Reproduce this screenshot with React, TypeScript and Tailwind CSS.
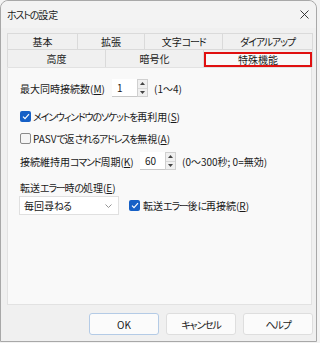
import React from "react";

function jp(text: string): React.ReactNode[] {
  const parts = text.split(/([\u3040-\u30ff]+)/);
  return parts.map((p, i) =>
    /^[\u3040-\u30ff]+$/.test(p) ? (
      <span key={i} className="tracking-[-1.2px]">
        {p}
      </span>
    ) : (
      <React.Fragment key={i}>{p}</React.Fragment>
    )
  );
}

function Label({ text, acc }: { text: string; acc: string }) {
  return (
    <span>
      {jp(text)}(<span className="underline">{acc}</span>)
    </span>
  );
}

function Spinner() {
  return (
    <div className="flex h-[18px] w-[11px] flex-col border border-[#d0d0d0] bg-[#f0f0f0]">
      <div className="flex flex-1 items-center justify-center border-b border-[#d8d8d8]">
        <svg width="5" height="3" viewBox="0 0 5 3"><path d="M0 3 L2.5 0 L5 3 Z" fill="#444" /></svg>
      </div>
      <div className="flex flex-1 items-center justify-center">
        <svg width="5" height="3" viewBox="0 0 5 3"><path d="M0 0 L2.5 3 L5 0 Z" fill="#444" /></svg>
      </div>
    </div>
  );
}

function NumInput({ value }: { value: string }) {
  return (
    <div className="flex items-center">
      <div className="flex h-[18px] w-[25px] items-center border-b border-[#c8c8c8] bg-white pl-[5px] text-[10px] text-[#1a1a1a]">
        {value}
      </div>
      <Spinner />
    </div>
  );
}

function Check({ checked }: { checked: boolean }) {
  return checked ? (
    <div className="flex h-[11px] w-[11px] items-center justify-center rounded-[2px] bg-[#1660c6]">
      <svg width="8" height="7" viewBox="0 0 8 7">
        <path d="M1 3.6 L3 5.6 L7 1.2" fill="none" stroke="white" strokeWidth="1.2" />
      </svg>
    </div>
  ) : (
    <div className="h-[11px] w-[11px] rounded-[2px] border border-[#8a8a8a] bg-[#f5f5f5]" />
  );
}

function Tab({ label, w, h, selected }: { label: string; w: string; h: string; selected?: boolean }) {
  return (
    <div className={`flex ${h} ${w} items-center justify-center border-r border-t border-[#dadada] text-[10px] text-[#1a1a1a]`}>
      {selected ? (
        <div className="mt-[1px] flex h-[15px] w-full items-center justify-center border-2 border-[#e01010] bg-[#f9f9f9]">{jp(label)}</div>
      ) : (
        jp(label)
      )}
    </div>
  );
}

function Btn({ label, def }: { label: string; def?: boolean }) {
  return (
    <div
      className={`flex h-[22px] w-[70px] items-center justify-center rounded-[3px] border text-[10px] text-[#1a1a1a] ${
        def ? "border-[#b4cbe6] bg-[#fbfbfb]" : "border-[#dedede] bg-[#fbfbfb]"
      }`}
    >
      {jp(label)}
    </div>
  );
}

export default function App() {
  return (
    <div className='h-[343px] w-[320px] bg-[#f3f3f3] font-["Noto_Sans_CJK_JP","Noto_Sans",sans-serif] [font-feature-settings:"palt"]'>
      <div className="flex h-[342px] w-[317px] flex-col rounded-t-[8px] border border-[#a8a8a8] bg-[#f0f0f0]">
        <div className="flex h-[27px] items-center justify-between rounded-t-[8px] bg-[#f3f3f3] pl-[6px] pr-[7px] text-[10px] text-[#1a1a1a]">
          <span>{jp("ホストの設定")}</span>
          <svg width="9" height="9" viewBox="0 0 9 9">
            <path d="M0.5 0.5 L8.5 8.5 M8.5 0.5 L0.5 8.5" stroke="#222" strokeWidth="0.9" />
          </svg>
        </div>
        <div className="mt-[5px] flex flex-col pl-[6px]">
          <div className="flex border-l border-[#dadada]">
            <Tab label="基本" w="w-[70px]" h="h-[16px]" />
            <Tab label="拡張" w="w-[67px]" h="h-[16px]" />
            <Tab label="文字コード" w="w-[78px]" h="h-[16px]" />
            <Tab label="ダイアルアップ" w="w-[90px]" h="h-[16px]" />
          </div>
          <div className="flex border-l border-[#dadada]">
            <Tab label="高度" w="w-[98px]" h="h-[18px]" />
            <Tab label="暗号化" w="w-[98px]" h="h-[18px]" />
            <Tab label="特殊機能" w="w-[109px]" h="h-[18px]" selected />
          </div>
          <div className="flex h-[238px] w-[305px] flex-col border border-[#e2e2e2] bg-[#f9f9f9] pl-[12px] text-[10px] text-[#1a1a1a]">
            <div className="mt-[11px] flex h-[18px] items-center whitespace-nowrap">
              <span className="w-[92px]"><Label text="最大同時接続数" acc="M" /></span>
              <NumInput value="1" />
              <span className="ml-[6px]">(1〜4)</span>
            </div>
            <div className="mt-[12px] flex h-[15px] items-center gap-[2px] whitespace-nowrap">
              <Check checked />
              <Label text="メインウィンドウのソケットを再利用" acc="S" />
            </div>
            <div className="mt-[7px] flex h-[15px] items-center gap-[2px] whitespace-nowrap">
              <Check checked={false} />
              <Label text="PASVで返されるアドレスを無視" acc="A" />
            </div>
            <div className="mt-[6px] flex h-[18px] items-center whitespace-nowrap">
              <span className="w-[120px]"><Label text="接続維持用コマンド周期" acc="K" /></span>
              <NumInput value="60" />
              <span className="ml-[6px]">(0〜300秒; 0=無効)</span>
            </div>
            <div className="mt-[10px] flex h-[15px] items-center whitespace-nowrap">
              <Label text="転送エラー時の処理" acc="E" />
            </div>
            <div className="mt-[1px] flex items-center whitespace-nowrap">
              <div className="-ml-[1px] flex h-[19px] w-[100px] items-center justify-between border border-[#e0e0e0] bg-white pl-[4px] pr-[6px]">
                <span>{jp("毎回尋ねる")}</span>
                <svg width="7" height="4" viewBox="0 0 7 4">
                  <path d="M0.5 0.5 L3.5 3.5 L6.5 0.5" fill="none" stroke="#888" strokeWidth="0.9" />
                </svg>
              </div>
              <div className="ml-[10px] flex items-center gap-[3px]">
                <Check checked />
                <Label text="転送エラー後に再接続" acc="R" />
              </div>
            </div>
          </div>
        </div>
        <div className="mt-[8px] flex justify-end gap-[7px] pr-[3px]">
          <Btn label="OK" def />
          <Btn label="キャンセル" />
          <Btn label="ヘルプ" />
        </div>
      </div>
    </div>
  );
}
